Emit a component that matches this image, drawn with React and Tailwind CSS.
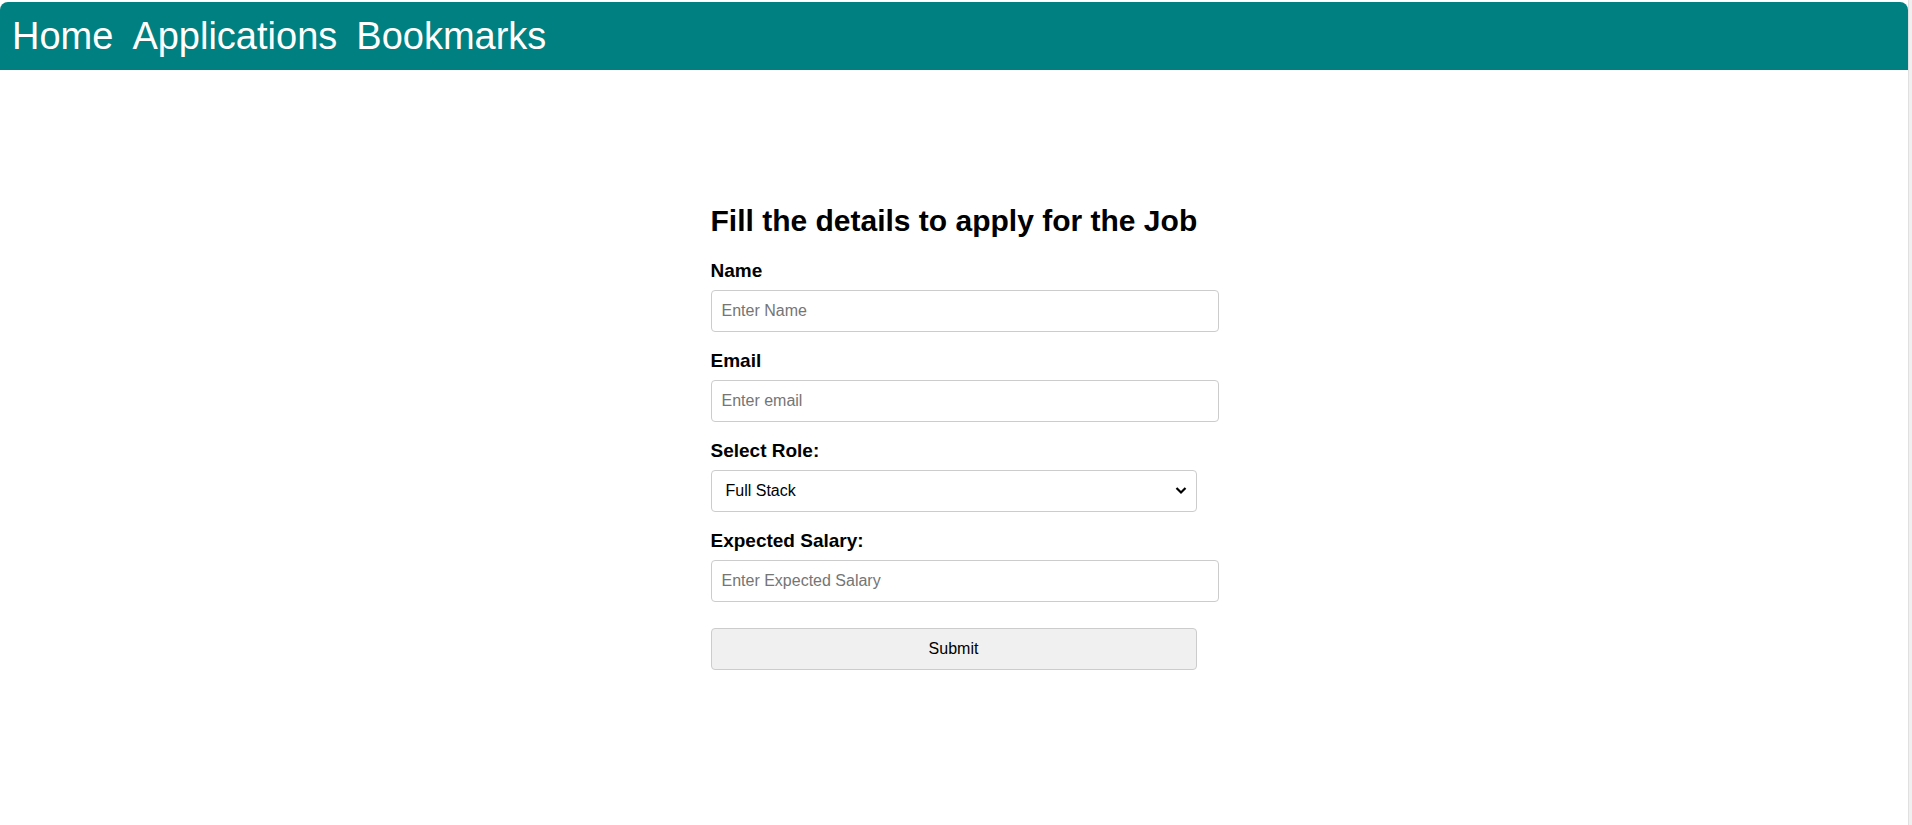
import React from "react";

function Field({ label, placeholder }) {
  return (
    <div className="flex flex-col">
      <label className="text-[19px] font-bold leading-[22px] text-black mb-2">{label}</label>
      <input
        type="text"
        placeholder={placeholder}
        className="w-[508px] h-[42px] border border-[#cccccc] rounded-[4px] px-[10px] text-[16px] text-black placeholder:text-[#757575] outline-none bg-white"
      />
    </div>
  );
}

export default function App() {
  return (
    <div className="flex min-h-[825px] bg-white" style={{ fontFamily: '"Liberation Sans", Arial, sans-serif' }}>
      <div className="flex-1 flex flex-col pt-[2px]">
        <nav className="h-[68px] bg-[#008080] rounded-t-[8px] flex items-center pl-[12px] gap-[19px] text-white text-[38px] leading-none">
          <a href="#" className="text-white">Home</a>
          <a href="#" className="text-white">Applications</a>
          <a href="#" className="text-white">Bookmarks</a>
        </nav>
        <div className="flex justify-center pt-[134px] pr-[1px]">
          <form className="w-[486px] flex flex-col" onSubmit={(e) => e.preventDefault()}>
            <h2 className="text-[30px] font-bold leading-[35px] text-black mb-[22px] whitespace-nowrap -mt-[1px]">
              Fill the details to apply for the Job
            </h2>
            <div className="flex flex-col gap-[18px]">
              <Field label="Name" placeholder="Enter Name" />
              <Field label="Email" placeholder="Enter email" />
              <div className="flex flex-col">
                <label className="text-[19px] font-bold leading-[22px] text-black mb-2">Select Role:</label>
                <div className="relative w-[486px] h-[42px]">
                  <select className="appearance-none w-full h-full border border-[#cccccc] rounded-[4px] pl-[14px] pr-8 text-[16px] text-black bg-white outline-none">
                    <option>Full Stack</option>
                    <option>Frontend</option>
                    <option>Backend</option>
                  </select>
                  <svg className="absolute right-[10px] top-[16px] pointer-events-none" width="12" height="9" viewBox="0 0 12 9">
                    <path d="M1.5 2 L6 6.5 L10.5 2" fill="none" stroke="#000" strokeWidth="2.2" />
                  </svg>
                </div>
              </div>
              <Field label="Expected Salary:" placeholder="Enter Expected Salary" />
            </div>
            <button
              type="submit"
              className="mt-[26px] w-[486px] h-[42px] bg-[#f0f0f0] border border-[#cccccc] rounded-[4px] text-[16px] text-black"
            >
              Submit
            </button>
          </form>
        </div>
      </div>
      <div className="w-[4px] bg-[#f0f0f0] border-l border-[#e0e0e0]" />
    </div>
  );
}
